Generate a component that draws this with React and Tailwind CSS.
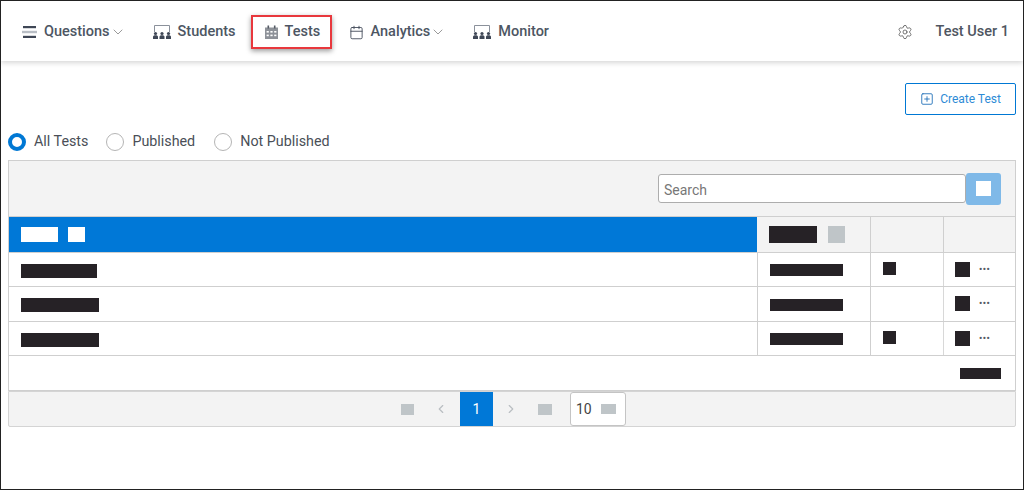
import React from "react";
import { ChevronDown, ChevronLeft, ChevronRight, Settings, SquarePlus, Calendar } from "lucide-react";

function Bars() {
  return (
    <svg width="15" height="14" viewBox="0 0 15 14" className="shrink-0">
      <rect x="1" y="1" width="13" height="2.2" fill="#3f4756" />
      <rect x="0" y="5.8" width="15" height="2.4" fill="#b9bec5" />
      <rect x="1" y="10.8" width="13" height="2.2" fill="#3f4756" />
    </svg>
  );
}

function Room() {
  return (
    <svg width="20" height="16" viewBox="0 0 20 16" className="shrink-0">
      <path d="M2.5 8V1.5H17.5V8" fill="none" stroke="#8b919b" strokeWidth="1" />
      <g fill="#3f4756">
        <circle cx="3.5" cy="9.5" r="1.6" />
        <circle cx="10" cy="9.5" r="1.6" />
        <circle cx="16.5" cy="9.5" r="1.6" />
        <path d="M1 15v-2.2c0-1 .8-1.6 2.5-1.6s2.5.6 2.5 1.6V15z" />
        <path d="M7.5 15v-2.2c0-1 .8-1.6 2.5-1.6s2.5.6 2.5 1.6V15z" />
        <path d="M14 15v-2.2c0-1 .8-1.6 2.5-1.6s2.5.6 2.5 1.6V15z" />
      </g>
    </svg>
  );
}

function FilledCal() {
  return (
    <svg width="13" height="14" viewBox="0 0 13 14" className="shrink-0">
      <path d="M0 2.5h13V14H0z" fill="#8e9299" />
      <rect x="2.5" y="0.5" width="1.6" height="3" fill="#555b65" />
      <rect x="8.9" y="0.5" width="1.6" height="3" fill="#555b65" />
      <g fill="#fff">
        <rect x="1.6" y="6" width="2.2" height="1.6" />
        <rect x="5.4" y="6" width="2.2" height="1.6" />
        <rect x="9.2" y="6" width="2.2" height="1.6" />
        <rect x="1.6" y="9.6" width="2.2" height="1.6" />
        <rect x="5.4" y="9.6" width="2.2" height="1.6" />
        <rect x="9.2" y="9.6" width="2.2" height="1.6" />
      </g>
    </svg>
  );
}

function Radio({ label, on, ml }) {
  return (
    <div className={`flex items-center gap-[8px] ${ml}`}>
      {on ? (
        <span className="w-[18px] h-[18px] rounded-full border-[4px] border-[#0078d4] bg-white" />
      ) : (
        <span className="w-[18px] h-[18px] rounded-full border border-[#b5b5b5] bg-white" />
      )}
      <span className="text-[14.3px] text-[#4a4f57]">{label}</span>
    </div>
  );
}

const Block = ({ className }) => <span className={`block bg-[#262226] ${className}`} />;

function Dots() {
  return <span className="text-[9px] font-bold leading-none tracking-[0.5px] text-[#555b65] ml-[9px]">•••</span>;
}

function Row({ w, mark, h }) {
  return (
    <div className={`grid grid-cols-[748px_113px_73px_1fr] border-b border-[#cfcfcf] ${h}`}>
      <div className="flex items-center pl-[12px] pt-[2px]"><Block className={`${w} h-[14px]`} /></div>
      <div className="flex items-center pl-[12px] pt-[1px] border-l border-[#cfcfcf]"><Block className="w-[73px] h-[12px]" /></div>
      <div className="flex items-center pl-[12px] pb-[2px] border-l border-[#cfcfcf]">{mark && <Block className="w-[13px] h-[13px]" />}</div>
      <div className="flex items-center pl-[11px] pb-[1px] border-l border-[#d8d8d8]"><Block className="w-[15px] h-[15px]" /><Dots /></div>
    </div>
  );
}

export default function App() {
  return (
    <div className="w-[1024px] h-[490px] border border-[#222] bg-white overflow-hidden font-['Roboto',sans-serif]">
      <nav className="h-[60px] pt-[2px] flex items-center pl-[21px] pr-[14px] bg-white shadow-[0_2px_5px_rgba(0,0,0,0.16)] text-[14.5px] font-medium text-[#4d5663]">
        <div className="flex items-center"><Bars /><span className="ml-[7px]">Questions</span><ChevronDown size={16} strokeWidth={1} className="text-[#666]" /></div>
        <div className="flex items-center ml-[26px]"><Room /><span className="ml-[6px]">Students</span></div>
        <div className="flex items-center ml-[15px] w-[81px] h-[34px] pl-[12px] border-2 border-[#e8383d] shadow-[0_2px_5px_rgba(0,0,0,0.4)]"><FilledCal /><span className="ml-[7px]">Tests</span></div>
        <div className="flex items-center ml-[17px]"><Calendar size={15} strokeWidth={1.4} className="text-[#3f4756]" /><span className="ml-[7px]">Analytics</span><ChevronDown size={16} strokeWidth={1} className="text-[#666]" /></div>
        <div className="flex items-center ml-[26px]"><Room /><span className="ml-[6px]">Monitor</span></div>
        <Settings size={16} strokeWidth={1.2} className="ml-auto text-[#555]" />
        <span className="ml-[22px] text-[#4f5661]">Test User 1</span>
      </nav>

      <div className="flex justify-end pt-[22px] pr-[7px]">
        <button className="w-[111px] h-[32px] flex items-center justify-center gap-[6px] border border-[#0078d4] rounded-[2px] bg-white text-[12px] text-[#2e8bd6]">
          <SquarePlus size={14} strokeWidth={1.5} className="text-[#1f6fb8]" />Create Test
        </button>
      </div>

      <div className="flex items-center h-[20px] mt-[17px] pl-[7px]">
        <Radio label="All Tests" on />
        <Radio label="Published" ml="ml-[18px]" />
        <Radio label="Not Published" ml="ml-[19px]" />
      </div>

      <div className="mx-[7px] mt-[8px] w-[1008px] border border-[#cfcfcf] border-b-0">
        <div className="h-[56px] bg-[#f3f3f3] flex items-center justify-end pr-[14px] border-b border-[#cfcfcf]">
          <div className="w-[308px] h-[29px] flex items-center bg-white border border-[#adadad] rounded-[3px] pl-[5px] pt-[3px] text-[14px] text-[#777]">Search</div>
          <div className="w-[35px] h-[32px] flex items-center justify-center bg-[#7fb9e8] rounded-[3px]">
            <span className="w-[15px] h-[15px] bg-white" />
          </div>
        </div>
        <div className="grid grid-cols-[748px_113px_73px_1fr] h-[36px] bg-[#f3f3f3] border-b border-[#cfcfcf]">
          <div className="bg-[#0078d7] flex items-center pl-[12px] gap-[10px]">
            <span className="w-[37px] h-[15px] bg-white" />
            <span className="w-[17px] h-[15px] bg-white" />
          </div>
          <div className="flex items-center pl-[12px] gap-[11px]">
            <Block className="w-[48px] h-[17px]" />
            <span className="w-[17px] h-[17px] bg-[#bfc5c8]" />
          </div>
          <div className="border-l border-[#cfcfcf]" />
          <div className="border-l border-[#cfcfcf]" />
        </div>
        <Row w="w-[76px]" mark h="h-[34px]" />
        <Row w="w-[78px]" h="h-[35px]" />
        <Row w="w-[78px]" mark h="h-[34px]" />
        <div className="h-[35px] flex items-center justify-end pr-[14px] border-b border-[#cfcfcf]">
          <Block className="w-[41px] h-[11px]" />
        </div>
      </div>

      <div className="mx-[7px] w-[1008px] h-[36px] bg-[#f3f3f3] border border-[#d4d4d4] rounded-b-[2px] flex items-center">
        <span className="ml-[392px] w-[13px] h-[11px] bg-[#bfc5c8]" />
        <ChevronLeft size={14} strokeWidth={2} className="ml-[20px] text-[#b9bec2]" />
        <span className="ml-[12px] w-[33px] h-[34px] bg-[#0078d7] text-white text-[14px] flex items-center justify-center">1</span>
        <ChevronRight size={14} strokeWidth={2} className="ml-[11px] text-[#b9bec2]" />
        <span className="ml-[20px] w-[14px] h-[11px] bg-[#bfc5c8]" />
        <div className="ml-[18px] w-[56px] h-[34px] bg-white border border-[#c4c4c4] rounded-[3px] flex items-center pl-[5px] text-[14px] text-[#444]">
          10<span className="ml-[9px] w-[15px] h-[10px] bg-[#bfc5c8]" />
        </div>
      </div>
    </div>
  );
}
